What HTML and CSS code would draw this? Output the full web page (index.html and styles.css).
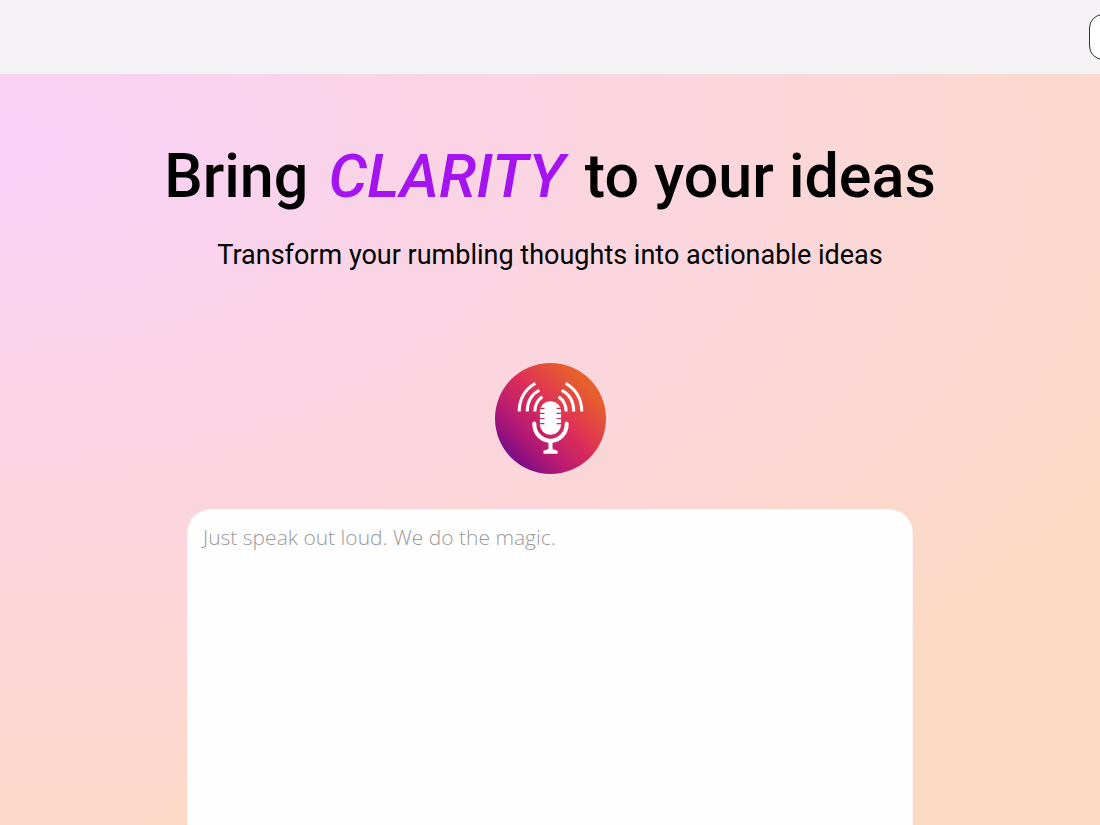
FILE: index.html
```html
<!DOCTYPE html>
<html lang="en">
<head>
    <meta charset="UTF-8">
    <meta name="viewport" content="width=device-width, initial-scale=1.0">
    <title>Bring clarity to your ideas</title>
    <link rel="stylesheet" href="styles.css">
</head>
<body>
    <header class="navbar">
        <button type="button" class="nav-button" aria-label="Menu"></button>
    </header>

    <main class="hero">
        <h1>Bring <em>CLARITY</em> to your ideas</h1>
        <p class="subtitle">Transform your rumbling thoughts into actionable ideas</p>

        <button type="button" class="record-button" aria-label="Record">
            <svg viewBox="0 0 110 110" aria-hidden="true">
                <!-- sound waves -->
                <g fill="none" stroke="#fff" stroke-width="3">
                    <path d="M24 48 C24 36 30 26 40 20"/>
                    <path d="M32 48 C32 38 36 31 44 27"/>
                    <path d="M39.500 48 C39.500 42 42 37 47 33.500"/>
                    <path d="M86 48 C86 36 80 26 70 20"/>
                    <path d="M78 48 C78 38 74 31 66 27"/>
                    <path d="M70.500 48 C70.500 42 68 37 63 33.500"/>
                </g>
                <!-- microphone -->
                <rect x="44.500" y="38" width="21" height="33" rx="10" fill="#fff"/>
                <path d="M44 45h5M44 50h5M44 55h5M44 60h5M61 45h5M61 50h5M61 55h5M61 60h5" stroke="#d32a5c" stroke-width="1.200"/>
                <path d="M39 60v1a16 16 0 0 0 32 0v-1" fill="none" stroke="#fff" stroke-width="4" stroke-linecap="round"/>
                <path d="M53 77h4v8q1 1 5 2v3H48v-3q4-1 5-2z" fill="#fff"/>
            </svg>
        </button>

        <textarea class="idea-box" aria-label="Your idea" placeholder="Just speak out loud. We do the magic."></textarea>
    </main>
</body>
</html>
```
FILE: styles.css
```css
* {
    box-sizing: border-box;
}
body {
    margin: 0;
    min-height: 100vh;
    display: flex;
    flex-direction: column;
    overflow-x: hidden;
    font-family: Roboto, Arial, sans-serif;
    color: #000;
}
.navbar {
    display: flex;
    justify-content: flex-end;
    padding: 14px 0;
    background-color: #f4f2f5;
    overflow: hidden;
}
/* The button runs past the right edge of the bar */
.nav-button {
    flex: none;
    width: 120px;
    height: 46px;
    margin-right: -109px;
    border: 1px solid #333;
    border-radius: 14px;
    background-color: #fff;
    cursor: pointer;
}
.hero {
    flex: 1;
    display: flex;
    flex-direction: column;
    align-items: center;
    padding-top: 66px;
    background: radial-gradient(ellipse 116% 97% at 0 10%, #f9d0fa, #fad4e6 32%, #fbd6dc 58%, #fbdac4);
}
h1 {
    margin: 0;
    font-size: 61px;
    font-weight: 500;
    line-height: 72px;
    text-align: center;
}
h1 em {
    padding: 0 5px;
    color: #a314f0;
}
.subtitle {
    margin: 27px 0 92px;
    font-size: 27px;
    font-weight: 400;
    line-height: 32px;
    text-align: center;
}
.record-button {
    width: 111px;
    height: 111px;
    padding: 0;
    border: none;
    border-radius: 50%;
    background: linear-gradient(45deg, #7d0d85 15%, #b51a73 32%, #de2e58 54%, #e65f2c 80%);
    cursor: pointer;
}
.record-button svg {
    display: block;
    width: 100%;
}
.idea-box {
    flex: 1;
    width: 66%;
    min-height: 316px;
    margin-top: 35px;
    padding: 12px 15px;
    border: 1px solid #fdf0f6;
    border-bottom: none;
    border-radius: 24px 24px 0 0;
    background-color: #fefefe;
    font-family: "Open Sans", Arial, sans-serif;
    font-size: 21px;
    font-weight: 300;
    line-height: 30px;
    resize: none;
    outline: none;
}
.idea-box::placeholder {
    color: #999;
}
```
